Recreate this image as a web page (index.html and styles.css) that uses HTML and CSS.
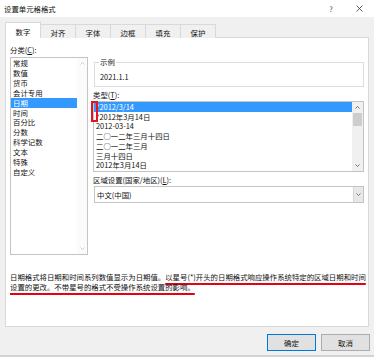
FILE: index.html
```html
<!DOCTYPE html>
<html lang="zh-CN">
<head>
    <meta charset="UTF-8">
    <title>设置单元格格式</title>
    <link rel="stylesheet" href="styles.css">
</head>
<body>
    <div class="titlebar">
        <span class="title">设置单元格格式</span>
        <span class="help">?</span>
        <svg class="close" width="7" height="7" viewBox="0 0 7 7">
            <path d="M0.5 0.5 L6.5 6.5 M6.5 0.5 L0.5 6.5" stroke="#333" stroke-width="0.8" fill="none"/>
        </svg>
    </div>

    <div class="tabs">
        <div class="tab active">数字</div>
        <div class="tab">对齐</div>
        <div class="tab">字体</div>
        <div class="tab">边框</div>
        <div class="tab">填充</div>
        <div class="tab">保护</div>
    </div>

    <div class="panel">
        <div class="columns">
            <div class="left">
                <div class="label">分类(<u>C</u>):</div>
                <div class="list category">
                    <ul class="items">
                        <li>常规</li>
                        <li>数值</li>
                        <li>货币</li>
                        <li>会计专用</li>
                        <li class="selected">日期</li>
                        <li>时间</li>
                        <li>百分比</li>
                        <li>分数</li>
                        <li>科学记数</li>
                        <li>文本</li>
                        <li>特殊</li>
                        <li>自定义</li>
                    </ul>
                    <div class="scrollbar disabled">
                        <div class="arrow">
                            <svg width="5" height="3" viewBox="0 0 5 3"><polyline points="0.5,2.5 2.5,0.5 4.5,2.5" fill="none" stroke="#c4c4c4" stroke-width="0.8"/></svg>
                        </div>
                        <div class="track"></div>
                        <div class="arrow">
                            <svg width="5" height="3" viewBox="0 0 5 3"><polyline points="0.5,0.5 2.5,2.5 4.5,0.5" fill="none" stroke="#c4c4c4" stroke-width="0.8"/></svg>
                        </div>
                    </div>
                </div>
            </div>

            <div class="right">
                <div class="sample">
                    <span class="legend">示例</span>
                    <div class="sample-value">2021.1.1</div>
                </div>

                <div class="label">类型(<u>T</u>):</div>
                <div class="list types">
                    <ul class="items">
                        <li class="selected">*2012/3/14</li>
                        <li>*2012年3月14日</li>
                        <li>2012-03-14</li>
                        <li>二○一二年三月十四日</li>
                        <li>二○一二年三月</li>
                        <li>三月十四日</li>
                        <li>2012年3月14日</li>
                    </ul>
                    <div class="scrollbar">
                        <div class="arrow">
                            <svg width="5" height="3" viewBox="0 0 5 3"><polyline points="0.5,2.5 2.5,0.5 4.5,2.5" fill="none" stroke="#606060" stroke-width="0.9"/></svg>
                        </div>
                        <div class="thumb"></div>
                        <div class="track"></div>
                        <div class="arrow">
                            <svg width="5" height="3" viewBox="0 0 5 3"><polyline points="0.5,0.5 2.5,2.5 4.5,0.5" fill="none" stroke="#606060" stroke-width="0.9"/></svg>
                        </div>
                    </div>
                    <div class="marker"></div>
                </div>

                <div class="label region-label">区域设置(国家/地区)(<u>L</u>):</div>
                <div class="select">
                    <span class="select-value">中文(中国)</span>
                    <div class="drop">
                        <svg width="5" height="3" viewBox="0 0 5 3"><polyline points="0.5,0.5 2.5,2.5 4.5,0.5" fill="none" stroke="#606060" stroke-width="0.8"/></svg>
                    </div>
                </div>
            </div>
        </div>

        <p class="desc">日期格式将日期和时间系列数值显示为日期值。<span class="mark">以星号(*)开头的日期格式响应操作系统特定的区域日期和时间<br>设置的更改。不带星号的格式不受操作系统设置的影响。</span></p>
    </div>

    <div class="buttons">
        <button class="btn default">确定</button>
        <button class="btn">取消</button>
    </div>
</body>
</html>
```

FILE: styles.css
```css
* {
    box-sizing: border-box;
}
body {
    margin: 0;
    height: 357px;
    overflow: hidden;
    background-color: #f0f0f0;
    border-bottom: 2px solid #d2d2d2;
    font-family: "Noto Sans CJK SC", "Noto Sans", sans-serif;
    font-size: 7.4px;
    color: #111;
}
.titlebar {
    display: flex;
    align-items: center;
    height: 17px;
    padding-left: 4px;
    background-color: #fff;
}
.title {
    line-height: 10px;
}
.help {
    margin-left: auto;
    width: 10px;
    text-align: center;
    color: #444;
}
.close {
    display: block;
    margin: 0 11px 0 20px;
}
.tabs {
    display: flex;
    align-items: flex-end;
    height: 16px;
    margin-top: 5px;
    padding-left: 5px;
}
.tab {
    display: flex;
    align-items: center;
    justify-content: center;
    width: 36px;
    height: 14px;
    margin-left: -1px;
    padding-top: 1px;
    border: 1px solid #d9d9d9;
    border-bottom: none;
    background-color: #f0f0f0;
}
.tab:first-child {
    margin-left: 0;
}
.tab.active {
    position: relative;
    z-index: 1;
    height: 16px;
    background-color: #fff;
}
.panel {
    height: 290px;
    margin: -1px 5px 0;
    border: 1px solid #d9d9d9;
    background-color: #fff;
}
.columns {
    display: grid;
    grid-template-columns: 78px 1fr;
    column-gap: 5px;
    padding: 0 4px;
}
.label {
    line-height: 10px;
}
.left .label {
    margin-top: 7px;
}
.list {
    display: flex;
    border: 1px solid #c4c4c4;
    background-color: #fff;
}
.items {
    flex: 1;
    margin: 0;
    padding: 0;
    list-style: none;
}
.items li {
    padding-left: 2px;
    white-space: nowrap;
}
.items li.selected {
    background-color: #3399ff;
    color: #fff;
}
.category {
    height: 198px;
    margin-top: 2px;
}
.category .items li {
    line-height: 9.9px;
}
.scrollbar {
    display: flex;
    flex-direction: column;
    width: 10px;
    background-color: #f0f0f0;
}
.scrollbar.disabled {
    background-color: #fbfbfb;
}
.arrow {
    display: flex;
    align-items: center;
    justify-content: center;
    height: 11px;
}
.arrow svg {
    display: block;
}
.track {
    flex: 1;
}
.thumb {
    height: 13px;
    margin: 0 1px;
    background-color: #cdcdcd;
}
.sample {
    height: 25px;
    margin: 24px 0 0 1px;
    border: 1px solid #dcdcdc;
}
.legend {
    display: block;
    width: fit-content;
    margin: -6px 0 0 4px;
    padding: 0 1px;
    line-height: 10px;
    background-color: #fff;
}
.sample-value {
    margin-top: 5px;
    padding-left: 5px;
    line-height: 10px;
}
.sample + .label {
    margin-top: 3px;
}
.types {
    position: relative;
    height: 71px;
    margin-top: 1px;
}
.types .items {
    padding-top: 0;
}
.types .items li {
    line-height: 9.7px;
}
.types .scrollbar {
    width: 11px;
}
.marker {
    position: absolute;
    left: -3px;
    top: -1px;
    width: 7px;
    height: 21px;
    border: 2px solid #e8141c;
}
.region-label {
    margin-top: 3px;
}
.select {
    display: flex;
    align-items: center;
    height: 17px;
    margin: 1px 0 0 1px;
    border: 1px solid #c4c4c4;
    background-color: #fff;
}
.select-value {
    flex: 1;
    padding-left: 2px;
}
.drop {
    display: flex;
    align-items: center;
    justify-content: center;
    width: 10px;
    height: 100%;
    background-color: #e8e8e8;
    border-left: 1px solid #d6d6d6;
}
.desc {
    margin: 17px 0 0;
    padding: 0 4px;
    line-height: 9.5px;
    white-space: nowrap;
}
.mark {
    text-decoration: underline;
    text-decoration-color: #e60012;
    text-decoration-thickness: 1.5px;
    text-underline-offset: 2.5px;
    text-decoration-skip-ink: none;
}
.buttons {
    display: flex;
    justify-content: flex-end;
    gap: 5px;
    padding: 7px 4px 0 0;
}
.btn {
    width: 49px;
    height: 17px;
    padding: 0;
    font-family: inherit;
    font-size: 7.4px;
    color: #111;
    background-color: #e1e1e1;
    border: 1px solid #adadad;
    border-radius: 0;
}
.btn.default {
    border-color: #0078d7;
}
```
